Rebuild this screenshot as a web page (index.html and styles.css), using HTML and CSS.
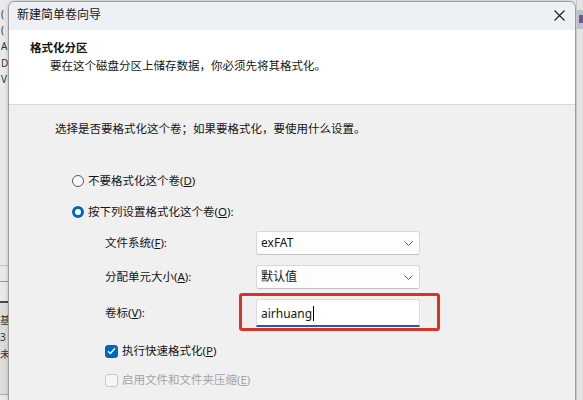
FILE: index.html
```html
<!DOCTYPE html>
<html lang="zh-CN">
<head>
    <meta charset="UTF-8">
    <meta name="viewport" content="width=device-width, initial-scale=1.0">
    <title>新建简单卷向导</title>
    <link rel="stylesheet" href="styles.css">
</head>
<body>
    <div class="screen">
        <!-- window behind the dialog, left side -->
        <div class="behind-left">
            <div class="drive-list">
                <span>(</span>
                <span>(</span>
                <span>A</span>
                <span>D</span>
                <span>V</span>
            </div>
            <div class="disk-lines">
                <div class="line light"></div>
                <div class="line mid"></div>
                <div class="line dark"></div>
            </div>
            <div class="disk-info">
                <span>基</span>
                <span>3</span>
                <span>未</span>
            </div>
        </div>

        <div class="dialog">
            <div class="titlebar">
                <span class="title">新建简单卷向导</span>
                <svg class="close" width="11" height="11" viewBox="0 0 11 11">
                    <path d="M0.5 0.5 L10.5 10.5 M10.5 0.5 L0.5 10.5" stroke="#1b1b1b" stroke-width="1.1" fill="none"/>
                </svg>
            </div>

            <div class="header">
                <div class="header-title">格式化分区</div>
                <div class="header-desc">要在这个磁盘分区上储存数据，你必须先将其格式化。</div>
            </div>

            <div class="content">
                <p class="intro">选择是否要格式化这个卷；如果要格式化，要使用什么设置。</p>

                <div class="radio first"><span class="radio-dot"></span>不要格式化这个卷(<u>D</u>)</div>
                <div class="radio checked"><span class="radio-dot"></span>按下列设置格式化这个卷(<u>O</u>):</div>

                <div class="fields">
                    <div class="field-label">文件系统(<u>F</u>):</div>
                    <div class="combo">
                        <span>exFAT</span>
                        <svg width="9" height="5" viewBox="0 0 9 5"><path d="M0.5 0.5 L4.5 4.5 L8.5 0.5" stroke="#606060" fill="none"/></svg>
                    </div>

                    <div class="field-label">分配单元大小(<u>A</u>):</div>
                    <div class="combo">
                        <span>默认值</span>
                        <svg width="9" height="5" viewBox="0 0 9 5"><path d="M0.5 0.5 L4.5 4.5 L8.5 0.5" stroke="#606060" fill="none"/></svg>
                    </div>

                    <div class="field-label">卷标(<u>V</u>):</div>
                    <div class="textbox highlight">
                        <span>airhuang</span><span class="caret"></span>
                    </div>
                </div>

                <div class="check first"><span class="box checked-box">
                    <svg width="9" height="8" viewBox="0 0 9 8"><path d="M1 4.2 L3.4 6.5 L8 1.3" stroke="#fff" stroke-width="1.3" fill="none"/></svg>
                </span>执行快速格式化(<u>P</u>)</div>
                <div class="check disabled"><span class="box"></span>启用文件和文件夹压缩(<u>E</u>)</div>
            </div>
        </div>

        <!-- window behind the dialog, right side -->
        <div class="behind-right">
            <div class="toolbar-bit"><span class="tool-icon"></span></div>
        </div>
    </div>
</body>
</html>
```

FILE: styles.css
```css
* {
    box-sizing: border-box;
    margin: 0;
    padding: 0;
}

body {
    width: 583px;
    height: 400px;
    overflow: hidden;
    background-color: #e8e8e8;
    font-family: "Noto Sans", "Noto Sans CJK SC", sans-serif;
    font-size: 11.5px;
    color: #141414;
}

.screen {
    display: flex;
    height: 400px;
}

/* left strip of the window behind */
.behind-left {
    width: 8px;
    flex-shrink: 0;
    overflow: hidden;
    background-color: #e9e9e9;
    display: flex;
    flex-direction: column;
    color: #333;
    white-space: nowrap;
}

.drive-list {
    display: flex;
    flex-direction: column;
    padding: 6px 0 0 1px;
    line-height: 16.2px;
    font-size: 10px;
}

.disk-lines {
    margin-top: 178px;
}

.line {
    height: 1px;
}

.line.light {
    background-color: #c4c4c4;
}

.line.mid {
    margin-top: 15px;
    background-color: #999;
}

.line.dark {
    margin-top: 19px;
    height: 2px;
    background-color: #4a4a4a;
}

.disk-info {
    display: flex;
    flex-direction: column;
    padding: 9px 0 0 0;
    line-height: 17px;
    font-size: 10px;
    background-color: #dcdcdc;
    height: 92px;
    border-bottom: 1px solid #aaa;
}

/* dialog */
.dialog {
    width: 568px;
    flex-shrink: 0;
    margin-top: 1px;
    height: 410px;
    border: 1px solid #9c9c9c;
    border-radius: 7px 7px 0 0;
    background-color: #f0f0f0;
    overflow: hidden;
    display: flex;
    flex-direction: column;
    box-shadow: 0 0 4px rgba(0, 0, 0, 0.2);
}

.titlebar {
    height: 28px;
    background-color: #edf0f5;
    display: flex;
    justify-content: space-between;
    align-items: flex-start;
    padding: 5px 10px 0 8px;
}

.title {
    font-size: 12px;
    line-height: 16px;
}

.close {
    margin-top: 3px;
}

.header {
    height: 75px;
    background-color: #fff;
    border-bottom: 1px solid #d9d9d9;
    padding: 9px 0 0 21px;
    line-height: 18px;
}

.header-title {
    font-weight: bold;
}

.header-desc {
    padding-left: 20px;
}

.content {
    padding-top: 15px;
    line-height: 18px;
}

.intro {
    padding-left: 46px;
}

.radio {
    display: flex;
    align-items: center;
    height: 18px;
    padding-left: 63px;
    margin-top: 13px;
}

.radio.first {
    margin-top: 34px;
}

.radio-dot {
    width: 12px;
    height: 12px;
    margin-right: 4px;
    border-radius: 50%;
    border: 1px solid #5c5c5c;
    background-color: #f8f8f8;
}

.radio.checked .radio-dot {
    border: 3.5px solid #0067c0;
    background-color: #fff;
}

.fields {
    display: grid;
    grid-template-columns: 151px 164px;
    grid-template-rows: 24px 24px 28px;
    row-gap: 10px;
    align-items: center;
    margin-top: 10px;
    padding-left: 96px;
}

.combo {
    height: 24px;
    display: flex;
    align-items: center;
    justify-content: space-between;
    padding: 0 6px 0 4px;
    background-color: #fdfdfd;
    border: 1px solid #d8d8d8;
    border-bottom-color: #c2c2c2;
    border-radius: 3px;
    font-size: 12px;
}

.textbox {
    height: 28px;
    display: flex;
    align-items: center;
    padding: 2px 0 0 4px;
    background-color: #fff;
    border: 1px solid #dcdcdc;
    border-bottom: 2px solid #1f5fa6;
    border-radius: 3px 3px 0 0;
    font-size: 12px;
}

.caret {
    width: 1px;
    height: 15px;
    margin-left: 1px;
    background-color: #000;
}

/* red annotation drawn over the volume label box */
.highlight {
    position: relative;
}

.highlight::after {
    content: "";
    position: absolute;
    left: -18px;
    top: -7px;
    right: -21px;
    bottom: -6px;
    border: 3px solid #d8332a;
    border-radius: 3px;
}

.check {
    display: flex;
    align-items: center;
    height: 18px;
    padding-left: 96px;
    margin-top: 11px;
}

.check.first {
    margin-top: 15px;
}

.box {
    width: 13px;
    height: 13px;
    margin-right: 4px;
    border-radius: 3px;
    border: 1px solid #c9c9c9;
    background-color: #f6f6f6;
    display: flex;
    align-items: center;
    justify-content: center;
}

.checked-box {
    background-color: #0067c0;
    border-color: #0067c0;
}

.check.disabled {
    color: #a3a3a3;
}

/* right strip of the window behind */
.behind-right {
    flex: 1;
    background-color: #e3e3e3;
    border-left: 1px solid #c8c8c8;
}

.toolbar-bit {
    margin-top: 10px;
    height: 19px;
    background-color: #b9c3d0;
    padding: 5px 0 0 2px;
}

.tool-icon {
    display: block;
    width: 6px;
    height: 8px;
    background-color: #6d5a8e;
}
```
